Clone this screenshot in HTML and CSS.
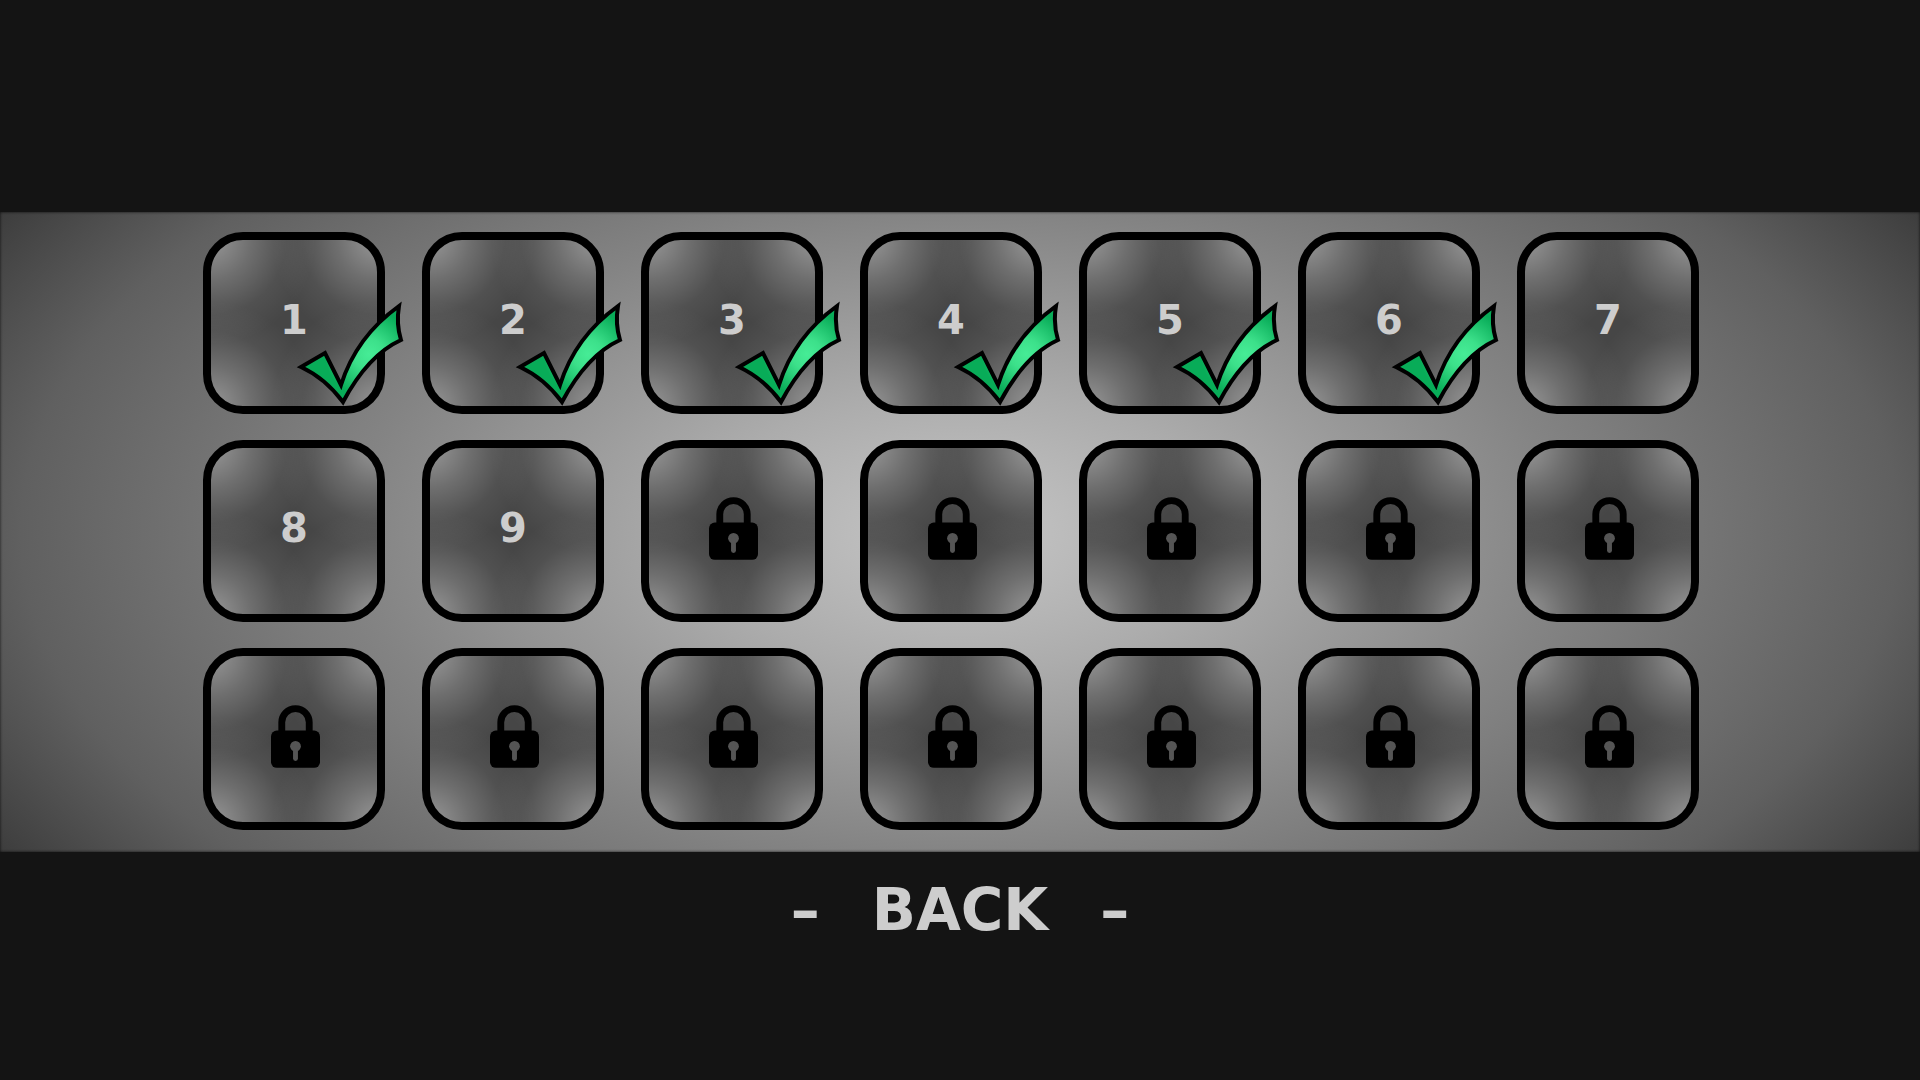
FILE: index.html
```html
<!DOCTYPE html>
<html lang="en">

<head>
    <meta charset="UTF-8" />
    <meta name="viewport" content="width=device-width, initial-scale=1.0" />
    <title>Level select</title>
    <link rel="stylesheet" href="styles.css">
</head>

<body>
    <!-- shared icons -->
    <svg class="icons" aria-hidden="true">
        <defs>
            <radialGradient id="green" gradientUnits="userSpaceOnUse" cx="74" cy="54" r="44">
                <stop offset="0" stop-color="#46ec96" />
                <stop offset="0.35" stop-color="#3ce08a" />
                <stop offset="1" stop-color="#08ac58" />
            </radialGradient>
        </defs>
        <symbol id="check" viewBox="0 0 110 108">
            <path d="M6 67L30 53L46 85Q61 37 104 6Q101 24 106 40Q73 55 48 102Q30 78 6 67Z"
                fill="url(#green)" stroke="#000" stroke-width="4" />
        </symbol>
        <symbol id="lock" viewBox="0 0 50 64">
            <path d="M11 30V17.500a14 14 0 0 1 28 0V30" fill="none" stroke="#000" stroke-width="7" />
            <rect y="26" width="50" height="38" rx="6" />
            <circle cx="25" cy="42" r="5.500" fill="#555" />
            <path d="M25 43V54.500" stroke="#555" stroke-width="5" stroke-linecap="round" />
        </symbol>
    </svg>

    <main class="levels">
        <button class="level" type="button">1<svg class="check"><use href="#check" /></svg></button>
        <button class="level" type="button">2<svg class="check"><use href="#check" /></svg></button>
        <button class="level" type="button">3<svg class="check"><use href="#check" /></svg></button>
        <button class="level" type="button">4<svg class="check"><use href="#check" /></svg></button>
        <button class="level" type="button">5<svg class="check"><use href="#check" /></svg></button>
        <button class="level" type="button">6<svg class="check"><use href="#check" /></svg></button>
        <button class="level" type="button">7</button>
        <button class="level" type="button">8</button>
        <button class="level" type="button">9</button>
        <button class="level" type="button" aria-label="Level 10" disabled><svg class="lock"><use href="#lock" /></svg></button>
        <button class="level" type="button" aria-label="Level 11" disabled><svg class="lock"><use href="#lock" /></svg></button>
        <button class="level" type="button" aria-label="Level 12" disabled><svg class="lock"><use href="#lock" /></svg></button>
        <button class="level" type="button" aria-label="Level 13" disabled><svg class="lock"><use href="#lock" /></svg></button>
        <button class="level" type="button" aria-label="Level 14" disabled><svg class="lock"><use href="#lock" /></svg></button>
        <button class="level" type="button" aria-label="Level 15" disabled><svg class="lock"><use href="#lock" /></svg></button>
        <button class="level" type="button" aria-label="Level 16" disabled><svg class="lock"><use href="#lock" /></svg></button>
        <button class="level" type="button" aria-label="Level 17" disabled><svg class="lock"><use href="#lock" /></svg></button>
        <button class="level" type="button" aria-label="Level 18" disabled><svg class="lock"><use href="#lock" /></svg></button>
        <button class="level" type="button" aria-label="Level 19" disabled><svg class="lock"><use href="#lock" /></svg></button>
        <button class="level" type="button" aria-label="Level 20" disabled><svg class="lock"><use href="#lock" /></svg></button>
        <button class="level" type="button" aria-label="Level 21" disabled><svg class="lock"><use href="#lock" /></svg></button>
    </main>

    <a href="#" class="back"><span>–</span><span>BACK</span><span>–</span></a>
</body>

</html>
```
FILE: styles.css
```css
* {
    padding: 0;
    margin: 0;
    box-sizing: border-box;
}

body {
    display: flex;
    flex-direction: column;
    align-items: center;
    padding-top: 212px;
    background-color: #141414;
    color: #cdcdcd;
    font-family: "DejaVu Sans", sans-serif;
    font-weight: bold;
}

.icons {
    position: absolute;
    width: 0;
    height: 0;
}

.levels {
    display: grid;
    grid-template-columns: repeat(auto-fit, 182px);
    justify-content: center;
    gap: 26px 37px;
    width: 100%;
    padding: 20px 218px 22px 200px;
    background-image: radial-gradient(1055px 561px at center, #c6c6c6 0%, #acacac 25%, #848484 57%, #606060 89%, #383838 110%);
    box-shadow: inset 0 0 3px rgba(0, 0, 0, 0.8);
}

.level {
    position: relative;
    display: flex;
    align-items: center;
    justify-content: center;
    height: 182px;
    padding-bottom: 6px;
    border: 8px solid black;
    border-radius: 40px;
    background-color: #464646;
    background-image:
        radial-gradient(circle at 0 0, rgba(255, 255, 255, 0.44), rgba(255, 255, 255, 0.22) 40px, rgba(255, 255, 255, 0.06) 75px, transparent 105px),
        radial-gradient(circle at 100% 0, rgba(255, 255, 255, 0.44), rgba(255, 255, 255, 0.22) 40px, rgba(255, 255, 255, 0.06) 75px, transparent 105px),
        radial-gradient(circle at 0 100%, rgba(255, 255, 255, 0.44), rgba(255, 255, 255, 0.22) 40px, rgba(255, 255, 255, 0.06) 75px, transparent 105px),
        radial-gradient(circle at 100% 100%, rgba(255, 255, 255, 0.44), rgba(255, 255, 255, 0.22) 40px, rgba(255, 255, 255, 0.06) 75px, transparent 105px);
    color: inherit;
    font: inherit;
    font-size: 40px;
    cursor: pointer;
}

.level:disabled {
    cursor: default;
}

.check {
    position: absolute;
    top: 60px;
    left: 84px;
    width: 110px;
    height: 108px;
}

.lock {
    width: 49px;
    height: 63px;
    margin-left: 3px;
}

.back {
    display: flex;
    gap: 52px;
    padding-top: 28px;
    color: inherit;
    font-size: 58px;
    line-height: 60px;
    text-decoration: none;
}
```
